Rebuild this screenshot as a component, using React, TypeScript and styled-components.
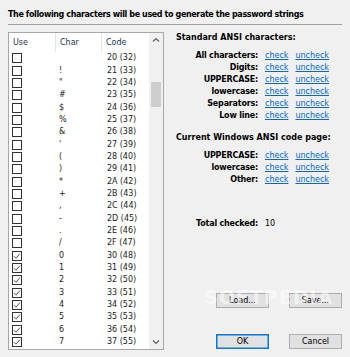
import React from "react";
import styled, { createGlobalStyle } from "styled-components";

const Global = createGlobalStyle`
  html, body { margin: 0; padding: 0; background: #f0f0f0; }
  body { font-family: "DejaVu Sans", "Noto Sans", sans-serif; font-size: 8px; color: #000; }
  * { box-sizing: border-box; }
`;

const Window = styled.div`
  width: 350px;
  height: 357px;
  background: #f0f0f0;
  padding: 8px 8px 0 8px;
  position: relative;
  overflow: hidden;
`;

const Title = styled.div`
  font-weight: bold;
  font-size: 8px;
  letter-spacing: -0.38px;
  line-height: 11px;
  height: 11px;
  margin-top: 1px;
  white-space: nowrap;
`;

const Rule = styled.div`
  height: 1px;
  background: #a0a0a0;
  margin: 4px 0 7px 0;
  width: 334px;
`;

const Body = styled.div`
  display: flex;
  gap: 12px;
`;

const ListBox = styled.div`
  width: 156px;
  height: 318px;
  border: 1px solid #a7a7a7;
  background: #fff;
  display: flex;
  overflow: hidden;
`;

const ListMain = styled.div`
  flex: 1;
  display: flex;
  flex-direction: column;
  overflow: hidden;
`;

const Header = styled.div`
  display: grid;
  grid-template-columns: 47px 46px 1fr;
  height: 19px;
  flex-shrink: 0;
`;

const HeadCell = styled.div<{ $last?: boolean }>`
  padding-left: 4px;
  display: flex;
  align-items: center;
  color: #23334d;
  border-right: ${(p) => (p.$last ? "none" : "1px solid #e5e5e5")};
`;

const Row = styled.div`
  display: grid;
  grid-template-columns: 47px 46px 1fr;
  height: 12.35px;
  align-items: center;
  flex-shrink: 0;
`;

const Cell = styled.div<{ $pad: number }>`
  padding-left: ${(p) => p.$pad}px;
  white-space: nowrap;
  color: #1a1a1a;
  line-height: 12px;
`;

const CheckBox = styled.div<{ $on: boolean }>`
  width: 10px;
  height: 10px;
  margin-left: 3px;
  border: 1px solid #333;
  background: #fff;
  display: flex;
  align-items: center;
  justify-content: center;
`;

const ScrollBar = styled.div`
  width: 14px;
  background: #f0f0f0;
  display: flex;
  flex-direction: column;
  align-items: center;
`;

const Arrow = styled.div`
  height: 14px;
  width: 14px;
  display: flex;
  align-items: center;
  justify-content: center;
`;

const Track = styled.div`
  flex: 1;
  width: 100%;
  padding: 35px 2px 0 2px;
`;

const Thumb = styled.div`
  height: 25px;
  background: #cdcdcd;
`;

const Side = styled.div`
  flex: 1;
  display: flex;
  flex-direction: column;
`;

const SectionTitle = styled.div<{ $top: number }>`
  font-weight: bold;
  line-height: 12px;
  margin-top: ${(p) => p.$top}px;
  white-space: nowrap;
`;

const OptionGrid = styled.div<{ $top: number; $row?: number }>`
  display: grid;
  grid-template-columns: 82px auto auto;
  column-gap: 7px;
  justify-content: start;
  margin-top: ${(p) => p.$top}px;
  grid-auto-rows: ${(p) => p.$row ?? 12}px;
  align-items: center;
`;

const Label = styled.div`
  font-weight: bold;
  text-align: right;
  white-space: nowrap;
  letter-spacing: -0.2px;
`;

const Link = styled.a`
  color: #0066cc;
  text-decoration: underline;
  white-space: nowrap;
  cursor: pointer;
`;

const Value = styled.div``;

const ButtonRow = styled.div<{ $top: number }>`
  display: flex;
  gap: 20px;
  margin-top: ${(p) => p.$top}px;
  padding-left: 40px;
`;

const Button = styled.button<{ $focus?: boolean }>`
  width: 53px;
  height: 15px;
  background: #e1e1e1;
  border: 1px solid ${(p) => (p.$focus ? "#0078d7" : "#adadad")};
  box-shadow: ${(p) => (p.$focus ? "inset 0 0 0 0.5px #0078d7" : "none")};
  font-family: inherit;
  font-size: 8px;
  color: #000;
  padding: 0;
`;

const Watermark = styled.div`
  position: absolute;
  left: 204px;
  top: 286px;
  font-family: "DejaVu Sans", sans-serif;
  font-weight: bold;
  font-size: 19px;
  letter-spacing: 1px;
  color: rgba(255, 255, 255, 0.5);
  pointer-events: none;
`;

const Tick = () => (
  <svg width="8" height="8" viewBox="0 0 8 8">
    <path d="M1 4.2 L3 6.2 L7 1.5" fill="none" stroke="#555" strokeWidth="1" />
  </svg>
);

const rows: { ch: string; code: number; on: boolean }[] = [];
for (let c = 32; c <= 55; c++) {
  rows.push({ ch: c === 32 ? "" : String.fromCharCode(c), code: c, on: c >= 48 });
}

const hex = (n: number) => n.toString(16).toUpperCase();

const standard = ["All characters:", "Digits:", "UPPERCASE:", "lowercase:", "Separators:", "Low line:"];
const current = ["UPPERCASE:", "lowercase:", "Other:"];

export default function App() {
  return (
    <Window>
      <Global />
      <Title>The following characters will be used to generate the password strings</Title>
      <Rule />
      <Body>
        <ListBox>
          <ListMain>
            <Header>
              <HeadCell>Use</HeadCell>
              <HeadCell>Char</HeadCell>
              <HeadCell $last>Code</HeadCell>
            </Header>
            {rows.map((r) => (
              <Row key={r.code}>
                <CheckBox $on={r.on}>{r.on && <Tick />}</CheckBox>
                <Cell $pad={3}>{r.ch}</Cell>
                <Cell $pad={5}>
                  {hex(r.code)} ({r.code})
                </Cell>
              </Row>
            ))}
          </ListMain>
          <ScrollBar>
            <Arrow>
              <svg width="8" height="6" viewBox="0 0 8 6">
                <path d="M1 4.5 L4 1.5 L7 4.5" fill="none" stroke="#606060" strokeWidth="1.2" />
              </svg>
            </Arrow>
            <Track>
              <Thumb />
            </Track>
            <Arrow>
              <svg width="8" height="6" viewBox="0 0 8 6">
                <path d="M1 1.5 L4 4.5 L7 1.5" fill="none" stroke="#606060" strokeWidth="1.2" />
              </svg>
            </Arrow>
          </ScrollBar>
        </ListBox>
        <Side>
          <SectionTitle $top={0}>Standard ANSI characters:</SectionTitle>
          <OptionGrid $top={5}>
            {standard.map((s) => (
              <React.Fragment key={s}>
                <Label>{s}</Label>
                <Link>check</Link>
                <Link>uncheck</Link>
              </React.Fragment>
            ))}
          </OptionGrid>
          <SectionTitle $top={11}>Current Windows ANSI code page:</SectionTitle>
          <OptionGrid $top={6} $row={11.7}>
            {current.map((s) => (
              <React.Fragment key={s}>
                <Label>{s}</Label>
                <Link>check</Link>
                <Link>uncheck</Link>
              </React.Fragment>
            ))}
          </OptionGrid>
          <OptionGrid $top={32}>
            <Label>Total checked:</Label>
            <Value>10</Value>
          </OptionGrid>
          <ButtonRow $top={64}>
            <Button>Load...</Button>
            <Button>Save...</Button>
          </ButtonRow>
          <ButtonRow $top={26}>
            <Button $focus>OK</Button>
            <Button>Cancel</Button>
          </ButtonRow>
        </Side>
      </Body>
      <Watermark>SOFTPEDIA</Watermark>
    </Window>
  );
}
